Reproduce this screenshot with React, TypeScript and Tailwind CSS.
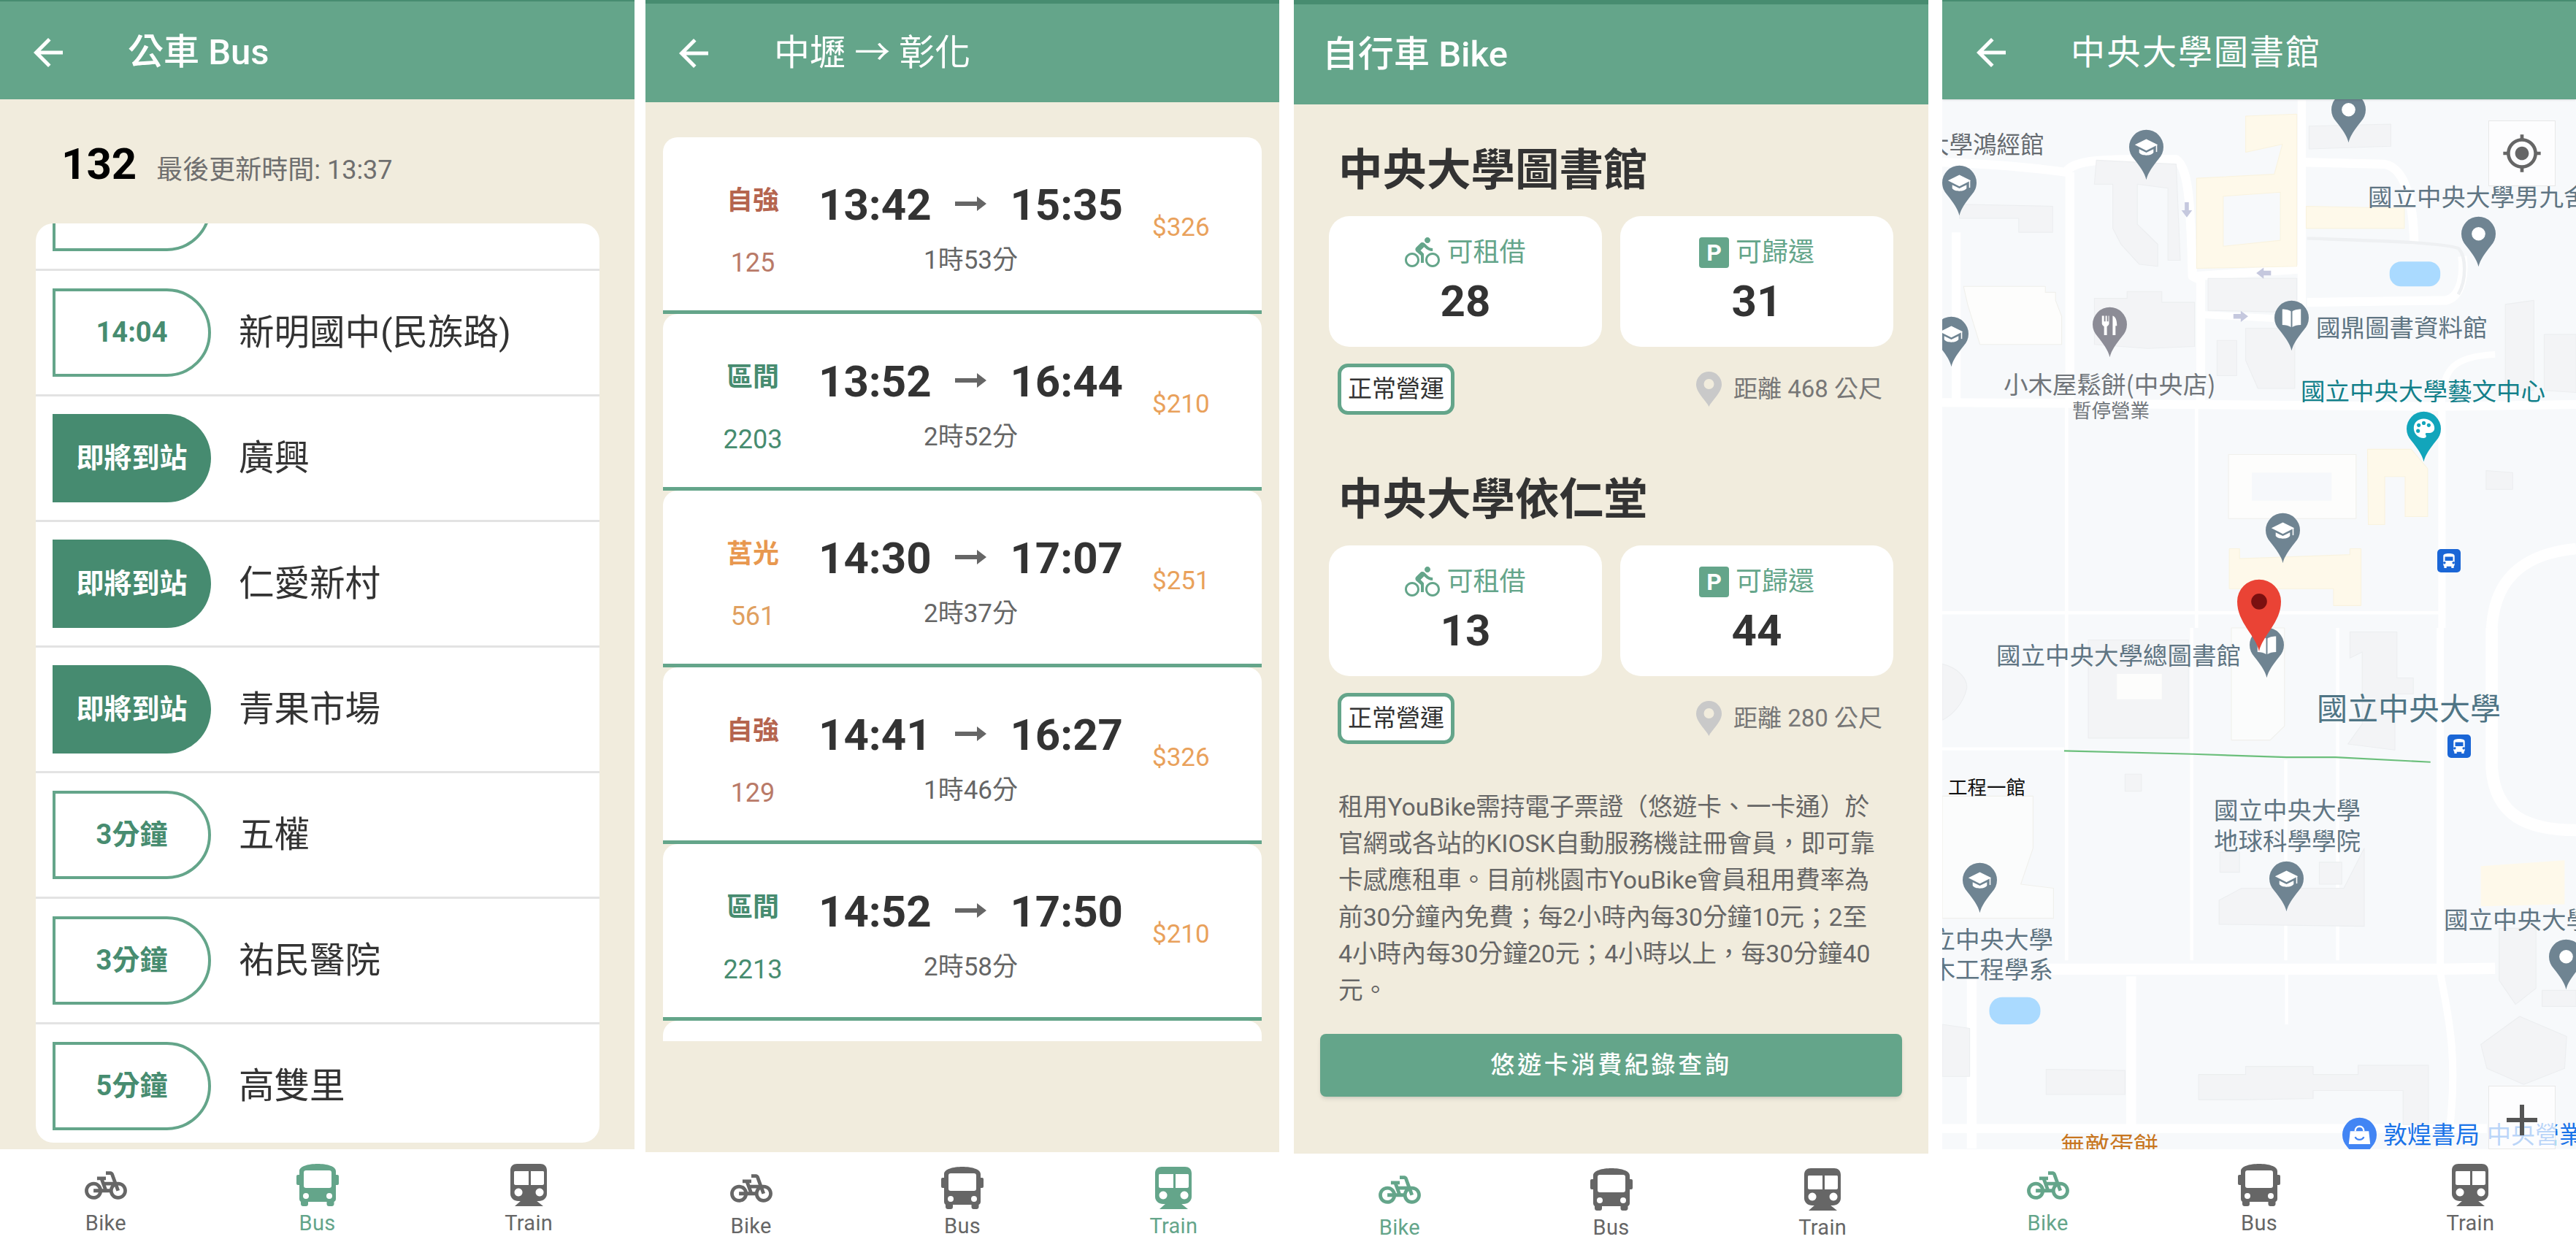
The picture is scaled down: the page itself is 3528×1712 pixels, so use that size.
import React from "react";
import { MdArrowBack, MdDirectionsBike, MdMyLocation, MdAdd } from "react-icons/md";

const PedalBike = ({ className }: { className?: string }) => (
  <svg viewBox="0 3.5 24 17" className={className} fill="currentColor">
    <path d="M18.18 10l-1.7-4.68C16.19 4.53 15.44 4 14.6 4H12v2h2.6l1.46 4h-4.81l-.36-1H12V7H7v2h1.75l1.82 5H9.9c-.44-2.23-2.31-3.88-4.65-3.99C2.45 9.87 0 12.2 0 15c0 2.8 2.2 5 5 5 2.46 0 4.45-1.69 4.9-4h4.2c.44 2.23 2.31 3.88 4.65 3.99 2.8.13 5.25-2.19 5.25-5 0-2.8-2.2-5-5-5h-.82zM7.82 16c-.4 1.17-1.49 2-2.82 2-1.68 0-3-1.32-3-3s1.32-3 3-3c1.33 0 2.42.83 2.82 2H5v2h2.82zm6.28-2h-1.4l-.73-2H15c-.44.58-.76 1.25-.9 2zm4.9 4c-1.68 0-3-1.32-3-3 0-.93.41-1.73 1.05-2.28l.96 2.64 1.88-.68-.97-2.67c.03 0 .06-.01.09-.01 1.68 0 3 1.32 3 3s-1.33 3-3.01 3z" />
  </svg>
);

const BusIcon = ({ className }: { className?: string }) => (
  <svg viewBox="0 0 58 58" className={className} fill="currentColor">
    <path fillRule="evenodd" d="M4 10C4 3 17 0 29 0s25 3 25 10v38c0 2-1 3-2.500 4v3c0 2-1.500 3-3 3h-4c-2 0-3-1-3-3v-3H16v3c0 2-1 3-3 3H9c-1.500 0-3-1-3-3v-3C5 51 4 50 4 48V10zm6 2c0-2 1-3 3-3h32c2 0 3 1 3 3v18c0 2-1 3-3 3H13c-2 0-3-1-3-3V12zm7 32a4 4 0 1 0-8 0 4 4 0 0 0 8 0zm32 0a4 4 0 1 0-8 0 4 4 0 0 0 8 0z" />
    <rect x="0" y="15" width="6" height="14" rx="2" />
    <rect x="52" y="15" width="6" height="14" rx="2" />
  </svg>
);

const TrainIcon = ({ className }: { className?: string }) => (
  <svg viewBox="0 0 50 58" className={className} fill="currentColor">
    <path fillRule="evenodd" d="M0 9C0 3 4 0 9 0h32c5 0 9 3 9 9v32c0 6-5 10-11 10H11C5 51 0 47 0 41V9zm5 3c0-2 1-2 2-2h18v19H7c-1 0-2-1-2-2V12zm23-2h16c1 0 2 0 2 2v15c0 1-1 2-2 2H28V10zM11 33.500a5.500 5.500 0 1 0 .1 0zm29 0a5.500 5.500 0 1 0 .1 0z" />
    <path d="M15 50h20l10 8H6z" />
  </svg>
);

type Tab = "Bike" | "Bus" | "Train";

const BottomNav = ({ active }: { active: Tab }) => {
  const tabs: { n: Tab; icon: React.ReactNode }[] = [
    { n: "Bike", icon: <PedalBike className="w-[58px] h-[41px]" /> },
    { n: "Bus", icon: <BusIcon className="w-[58px] h-[58px]" /> },
    { n: "Train", icon: <TrainIcon className="w-[50px] h-[58px]" /> },
  ];
  return (
    <div className="flex-1 w-full bg-white flex shrink-0">
      {tabs.map((t) => (
        <div
          key={t.n}
          className={`flex-1 flex flex-col items-center pt-[20px] ${t.n === active ? "text-[#64a58a]" : "text-[#666666]"}`}
        >
          <div className="h-[58px] flex items-center justify-center">{t.icon}</div>
          <div className="mt-[5px] text-[29px] leading-[36px] tracking-[0.3px]">{t.n}</div>
        </div>
      ))}
    </div>
  );
};

const Panel = ({ className, children }: { className: string; children: React.ReactNode }) => (
  <div className={`h-[1712px] flex flex-col overflow-hidden shrink-0 ${className}`}>{children}</div>
);

/* ---------- Bus ---------- */
const stops: { badge: string; name: string; on?: boolean }[] = [
  { badge: "14:02", name: "新明路" },
  { badge: "14:04", name: "新明國中(民族路)" },
  { badge: "即將到站", name: "廣興", on: true },
  { badge: "即將到站", name: "仁愛新村", on: true },
  { badge: "即將到站", name: "青果市場", on: true },
  { badge: "3分鐘", name: "五權" },
  { badge: "3分鐘", name: "祐民醫院" },
  { badge: "5分鐘", name: "高雙里" },
];

const BusPanel = () => (
  <Panel className="w-[869px]">
    <div className="h-[136px] shrink-0 bg-[#64a58a] border-t-[2px] border-[#478c70] pt-[6px] flex items-center text-white shadow-sm">
      <MdArrowBack size={60} className="ml-[36px]" />
      <div className="ml-[79px] text-[49px] font-medium leading-[60px]">公車 Bus</div>
    </div>
    <div className="h-[1438px] shrink-0 bg-[#f1ecdd] flex flex-col">
      <div className="h-[170px] shrink-0 pl-[84px] pt-[59px] flex items-baseline">
        <span className="text-[60px] leading-[60px] font-bold text-black">132</span>
        <span className="ml-[27px] text-[36px] leading-[40px] text-[#6f6f6f]">最後更新時間: 13:37</span>
      </div>
      <div className="ml-[49px] w-[772px] h-[1259px] bg-white rounded-[24px] overflow-hidden">
        <div className="-mt-[107px]">
          {stops.map((s, i) => (
            <div key={i} className="h-[172px] border-b-[3px] border-[#e3e3e3] flex items-center pl-[23px]">
              <div
                className={`w-[217px] h-[121px] rounded-r-[62px] flex items-center justify-center text-[38px] font-bold ${
                  s.on ? "bg-[#468b70] text-white" : "border-[4px] border-[#64a58a] text-[#478c70] bg-white"
                }`}
              >
                {s.badge}
              </div>
              <div className="ml-[38px] text-[48.5px] leading-[60px] text-[#333333]">{s.name}</div>
            </div>
          ))}
        </div>
      </div>
    </div>
    <BottomNav active="Bus" />
  </Panel>
);

/* ---------- Train ---------- */
const trains = [
  { t: "自強", n: "125", a: "13:42", b: "15:35", d: "1時53分", p: "$326", c: "text-[#b5654f]", nc: "text-[#b97a68]" },
  { t: "區間", n: "2203", a: "13:52", b: "16:44", d: "2時52分", p: "$210", c: "text-[#478c70]", nc: "text-[#478c70]" },
  { t: "莒光", n: "561", a: "14:30", b: "17:07", d: "2時37分", p: "$251", c: "text-[#e8984f]", nc: "text-[#e0a060]" },
  { t: "自強", n: "129", a: "14:41", b: "16:27", d: "1時46分", p: "$326", c: "text-[#b5654f]", nc: "text-[#b97a68]" },
  { t: "區間", n: "2213", a: "14:52", b: "17:50", d: "2時58分", p: "$210", c: "text-[#478c70]", nc: "text-[#478c70]" },
];

const TrainPanel = () => (
  <Panel className="w-[868px] ml-[15px]">
    <div className="h-[140px] shrink-0 bg-[#64a58a] border-t-[5px] border-[#478c70] flex items-center text-white shadow-sm">
      <MdArrowBack size={60} className="ml-[36px]" />
      <div className="ml-[80px] text-[49px] leading-[60px]">中壢 → 彰化</div>
    </div>
    <div className="h-[1438px] shrink-0 bg-[#f1ecdd] pt-[48px]">
      <div className="ml-[24px] w-[820px] h-[1238px] overflow-hidden">
        {trains.map((r) => (
          <div key={r.n} className="h-[242px] bg-white rounded-t-[20px] border-b-[5px] border-[#64a58a] flex">
            <div className="ml-[33px] w-[180px] flex flex-col items-center pt-[67px]">
              <div className={`text-[36px] leading-[40px] font-bold ${r.c}`}>{r.t}</div>
              <div className={`mt-[45px] text-[36px] leading-[40px] ${r.nc}`}>{r.n}</div>
            </div>
            <div className="w-[417px] flex flex-col pt-[63px]">
              <div className="flex items-center justify-between text-[60px] leading-[60px] font-bold text-[#333333]">
                <span>{r.a}</span>
                <svg viewBox="0 0 43 24" className="w-[43px] h-[24px] text-[#666666] -mt-[4px]" fill="currentColor">
                  <path d="M0 9h30V2l13 10-13 10v-7H0z" />
                </svg>
                <span>{r.b}</span>
              </div>
              <div className="mt-[26px] text-center text-[35px] leading-[40px] text-[#666666]">{r.d}</div>
            </div>
            <div className="ml-[40px] pt-[104px] text-[35px] leading-[40px] text-[#e9a15b]">{r.p}</div>
          </div>
        ))}
        <div className="h-[60px] bg-white rounded-t-[20px]" />
      </div>
    </div>
    <BottomNav active="Train" />
  </Panel>
);

/* ---------- Bike ---------- */
const ParkIcon = () => (
  <div className="w-[41px] h-[42px] bg-[#64a58a] rounded-[4px] flex items-center justify-center text-white text-[32px] leading-none font-bold">
    P
  </div>
);

const StatCard = ({ icon, label, value }: { icon: React.ReactNode; label: string; value: string }) => (
  <div className="w-[374px] h-[179px] bg-white rounded-[28px] flex flex-col items-center pt-[30px]">
    <div className="flex items-center h-[40px] gap-[9px] text-[#64a58a] text-[36px] leading-[40px]">
      {icon}
      <span>{label}</span>
    </div>
    <div className="mt-[17px] text-[60px] leading-[60px] font-bold text-[#333333]">{value}</div>
  </div>
);

const PinGlyph = ({ className }: { className?: string }) => (
  <svg viewBox="0 0 35 48" className={className} fill="currentColor">
    <path
      fillRule="evenodd"
      d="M17.5 48C14 40 0 29 0 17.5a17.5 17.5 0 0 1 35 0C35 29 21 40 17.5 48zm0-24a7 7 0 1 0 0-14 7 7 0 0 0 0 14z"
    />
  </svg>
);

const Station = ({ name, rent, park, dist, first }: { name: string; rent: string; park: string; dist: string; first?: boolean }) => (
  <div className={first ? "pt-[61px]" : "pt-[87px]"}>
    <div className="ml-[61px] text-[60.5px] leading-[60px] font-bold text-[#333333]">{name}</div>
    <div className="mt-[32px] ml-[48px] flex gap-[25px]">
      <StatCard icon={<MdDirectionsBike size={48} />} label="可租借" value={rent} />
      <StatCard icon={<ParkIcon />} label="可歸還" value={park} />
    </div>
    <div className="mt-[23px] flex items-center justify-between pl-[60px] pr-[63px]">
      <div className="w-[160px] h-[70px] bg-white border-[5px] border-[#64a58a] rounded-[14px] flex items-center justify-center text-[33px] text-[#333333]">
        正常營運
      </div>
      <div className="flex items-center gap-[16px] text-[33px] text-[#777777]">
        <PinGlyph className="w-[35px] h-[48px] text-[#c9c9c9]" />
        <span>距離 {dist} 公尺</span>
      </div>
    </div>
  </div>
);

const BikePanel = () => (
  <Panel className="w-[869px] ml-[20px]">
    <div className="h-[143px] shrink-0 bg-[#64a58a] border-t-[6px] border-[#478c70] flex items-center text-white shadow-sm">
      <div className="ml-[39px] text-[49px] font-medium leading-[60px]">自行車 Bike</div>
    </div>
    <div className="h-[1437px] shrink-0 bg-[#f1ecdd]">
      <Station first name="中央大學圖書館" rent="28" park="31" dist="468" />
      <Station name="中央大學依仁堂" rent="13" park="44" dist="280" />
      <div className="mt-[62px] ml-[61px] text-[33.7px] leading-[50.2px] text-[#666666] whitespace-nowrap">
        租用YouBike需持電子票證（悠遊卡、一卡通）於
        <br />
        官網或各站的KIOSK自動服務機註冊會員，即可靠
        <br />
        卡感應租車。目前桃園市YouBike會員租用費率為
        <br />
        前30分鐘內免費；每2小時內每30分鐘10元；2至
        <br />
        4小時內每30分鐘20元；4小時以上，每30分鐘40
        <br />
        元。
      </div>
      <div className="mt-[34px] ml-[36px] w-[797px] h-[86px] bg-[#64a58a] rounded-[8px] shadow-md flex items-center justify-center text-white text-[33px] tracking-[3.7px] font-medium">
        悠遊卡消費紀錄查詢
      </div>
    </div>
    <BottomNav active="Bike" />
  </Panel>
);

/* ---------- Map ---------- */
type PinKind = "grad" | "dot" | "book" | "fork" | "palette" | "bag";
const pins: { x: number; tip: number; k: PinKind; c: string }[] = [
  { x: 557, tip: 60, k: "dot", c: "#6f8492" },
  { x: 280, tip: 111, k: "grad", c: "#6f8492" },
  { x: 24, tip: 160, k: "grad", c: "#6f8492" },
  { x: 13, tip: 367, k: "grad", c: "#6f8492" },
  { x: 735, tip: 230, k: "dot", c: "#6f8492" },
  { x: 479, tip: 345, k: "book", c: "#6f8492" },
  { x: 230, tip: 354, k: "fork", c: "#8c8c96" },
  { x: 660, tip: 497, k: "palette", c: "#12a5bb" },
  { x: 467, tip: 636, k: "grad", c: "#6f8492" },
  { x: 445, tip: 793, k: "book", c: "#6f8492" },
  { x: 52, tip: 1115, k: "grad", c: "#6f8492" },
  { x: 472, tip: 1113, k: "grad", c: "#6f8492" },
  { x: 855, tip: 1220, k: "dot", c: "#6f8492" },
  { x: 572, tip: 1464, k: "bag", c: "#4285f4" },
];

const PinArt = ({ k }: { k: PinKind }) => {
  if (k === "dot") return <circle cx="24" cy="24" r="9.5" fill="#fff" />;
  if (k === "grad")
    return (
      <g fill="#fff">
        <path d="M24 13l16 8-16 8-16-8z" />
        <path d="M14 27l10 5 10-5v5c-3 5-17 5-20 0z" />
        <rect x="37.5" y="21" width="1.6" height="10" />
      </g>
    );
  if (k === "book")
    return (
      <g fill="#fff">
        <path d="M11 12c5 0 10 1 12 3v22c-3-2-7-3-12-3z" />
        <path d="M37 12c-5 0-10 1-12 3v22c3-2 7-3 12-3z" />
      </g>
    );
  if (k === "fork")
    return (
      <g fill="#fff">
        <path d="M14 12h2v8h2v-8h2v8h2v-8h1v11c0 2-2 3-3 4v12h-4V27c-1-1-3-2-3-4V12z" />
        <path d="M28 12c4 1 6 6 6 14h-2v13h-4z" />
      </g>
    );
  if (k === "palette")
    return (
      <g>
        <path fill="#fff" d="M24 10c8 0 15 6 15 13 0 5-4 7-8 7h-3c-2 0-2 2-1 3 1 2 0 4-3 4-8 0-14-6-14-14s6-13 14-13z" />
        <circle cx="17" cy="19" r="2.6" fill="#12a5bb" />
        <circle cx="24" cy="16" r="2.6" fill="#12a5bb" />
        <circle cx="31" cy="19" r="2.6" fill="#12a5bb" />
        <circle cx="16" cy="27" r="2.6" fill="#12a5bb" />
      </g>
    );
  return (
    <g fill="none" stroke="#fff">
      <path fill="#fff" stroke="none" d="M11 19h26l2 18H9z" />
      <path strokeWidth="2.4" d="M18 19c0-9 12-9 12 0" />
      <path strokeWidth="2.4" stroke="#4285f4" d="M18 27c2 5 10 5 12 0" />
    </g>
  );
};

const labels: { t: string; x: number; y: number; s: string; c: string }[] = [
  { t: "大學鴻經館", x: -23, y: 60, s: "text-[32.5px]", c: "text-[#666b70]" },
  { t: "國立中央大學男九舍", x: 583, y: 132, s: "text-[33.5px]", c: "text-[#5f7583]" },
  { t: "國鼎圖書資料館", x: 512, y: 311, s: "text-[33.5px]", c: "text-[#5f7583]" },
  { t: "小木屋鬆餅(中央店)", x: 84, y: 389, s: "text-[33.5px]", c: "text-[#70757a]" },
  { t: "暫停營業", x: 178, y: 425, s: "text-[26.5px]", c: "text-[#70757a]" },
  { t: "國立中央大學藝文中心", x: 491, y: 398, s: "text-[33.5px]", c: "text-[#12808a]" },
  { t: "國立中央大學總圖書館", x: 74, y: 760, s: "text-[33.5px]", c: "text-[#5f7583]" },
  { t: "國立中央大學", x: 513, y: 832, s: "text-[42px]", c: "text-[#4f7585]" },
  { t: "工程一館", x: 8, y: 941, s: "text-[26.5px]", c: "text-[#111111]" },
  { t: "國立中央大學", x: 372, y: 972, s: "text-[33.5px]", c: "text-[#5f7583]" },
  { t: "地球科學學院", x: 372, y: 1014, s: "text-[33.5px]", c: "text-[#5f7583]" },
  { t: "國立中央大學", x: -49, y: 1149, s: "text-[33.5px]", c: "text-[#5f7583]" },
  { t: "土木工程學系", x: -49, y: 1190, s: "text-[33.5px]", c: "text-[#5f7583]" },
  { t: "國立中央大學", x: 687, y: 1122, s: "text-[33.5px]", c: "text-[#5f7583]" },
  { t: "無敵蛋餅", x: 162, y: 1431, s: "text-[33.5px]", c: "text-[#c8761e]" },
  { t: "敦煌書局", x: 604, y: 1416, s: "text-[33px]", c: "text-[#1a73e8]" },
  { t: "中央營業", x: 746, y: 1416, s: "text-[33px]", c: "text-[#1a73e8]" },
];

const MapBackground = () => {
  const grey = "#f3f4f6";
  const line = "#eceef0";
  return (
    <svg className="absolute left-0 top-0 w-[868px] h-[1438px]" viewBox="0 0 868 1438">
      <rect width="868" height="1438" fill="#f7f9fb" />
      <g transform="translate(-10,-136) scale(0.56,0.5485)" fill="none" strokeLinejoin="round">
        <g stroke="#ffffff">
          <path strokeWidth="22" d="M18 1005L1230 1015L1568 1010" />
          <path strokeWidth="22" d="M330 430V1000" />
          <path strokeWidth="22" d="M18 405C150 410 250 420 320 430C340 400 400 395 590 398C620 420 625 500 630 690L650 700V1000" />
          <path strokeWidth="22" d="M630 690L897 672" />
          <path strokeWidth="20" d="M897 250V770" />
          <path strokeWidth="22" d="M897 405L1100 410C1150 420 1170 500 1172 610" />
          <path strokeWidth="18" d="M640 785L830 795" />
          <path strokeWidth="22" d="M910 755L1250 750C1290 740 1295 680 1290 640" />
          <path strokeWidth="18" d="M1240 1010V1568" />
          <path strokeWidth="16" d="M1240 1010C1240 920 1270 890 1370 885" />
          <path strokeWidth="22" d="M52 580V1000" />
          <path strokeWidth="28" d="M1362 1568C1370 1420 1470 1380 1568 1370" />
          <path strokeWidth="8" d="M18 1530H1240M640 1010V1568M322 1010V1568" />
        </g>
        <path stroke="#eef0f2" strokeWidth="8" d="M910 595C1050 600 1240 605 1280 620C1300 640 1300 700 1280 735" />
        <g fill={grey} stroke={line} strokeWidth="2">
          <path d="M395 400L590 410L600 650L570 650L570 470L495 460L495 560L545 610L545 665L500 660L455 610L435 570L435 460L390 460Z" />
          <path d="M390 745H470V728H555V755H635V865L520 870L390 860Z" />
          <path d="M915 315L1115 310V365L915 372Z" />
          <path d="M668 695H885V780L668 775Z" />
          <path d="M690 850H738V938H690Z" />
          <path d="M760 820H880V970H790L760 900Z" />
          <path d="M1395 760L1465 750V975H1395Z" />
          <path d="M1490 835H1568V980L1490 975Z" />
          <path d="M60 510L288 515V580H205V545H60Z" />
          <path d="M1348 1175L1413 1180V1222H1348Z" />
        </g>
        <g fill="#fdfdfc" stroke="#f0f0ec" strokeWidth="2">
          <path d="M70 715H270V730H295V750L310 790V860H110L80 760Z" />
          <path d="M718 1135H1030V1295H718Z" />
        </g>
        <path d="M775 1180H970V1250H775Z" fill="#f6f8fb" />
        <g fill="#fef9ea" stroke="#f9f3df" strokeWidth="2">
          <path fillRule="evenodd" d="M760 290L885 285V665L640 670V445L830 435L850 360L760 380ZM705 490V615L845 600V480Z" />
          <path d="M908 515L1148 520V570H908Z" />
          <path d="M1058 1122H1165L1205 1170V1290H1150V1190H1100V1310H1060Z" />
          <path d="M720 1370H745V1395L1015 1385V1370H1042V1512H975V1470H720Z" />
        </g>
        <rect x="1112" y="653" width="124" height="62" rx="28" fill="#aadaff" />
        <g fill="#c5c8de">
          <path d="M611 505h10v20h8l-13 18-13-18h8z" />
          <path d="M822 676v12h-18v8l-18-14 18-14v8z" />
          <path d="M730 784v12h18v8l18-14-18-14v8z" />
        </g>
      </g>
      <g transform="translate(-10,724) scale(0.56,0.5485)" fill="none" strokeLinejoin="round">
        <g stroke="#ffffff">
          <path strokeWidth="28" d="M18 852H1240L1370 850" />
          <path strokeWidth="18" d="M1236 0V860C1250 950 1280 1050 1260 1240" />
          <path strokeWidth="8" d="M18 302H316M322 0V830M628 0V830M985 0V830M858 330V830M860 860V990" />
          <path strokeWidth="24" d="M480 870V1240M90 870V1300" />
          <path strokeWidth="22" d="M18 1250H1350" />
          <path strokeWidth="30" d="M1362 0V350C1370 470 1450 505 1568 505" />
        </g>
        <g fill={grey} stroke={line} strokeWidth="2">
          <path d="M375 30H620V275H375Z" />
          <path d="M1015 10H1130V125H1170V165H1125V305L1010 290L1045 240V60L1015 75Z" />
          <path d="M18 90C60 100 80 130 78 150C70 190 40 220 18 230Z" />
          <path d="M465 365H505V408H465Z" />
          <path d="M695 680L750 650H1000L1050 550V745L695 740Z" />
          <path d="M697 560H745V610H697Z" />
          <path d="M940 585H995V640H940Z" />
          <path d="M272 1102L465 1105V1165H272Z" />
          <path d="M645 1115H760V1095H925V1115H1035V1092H1207V1240H1145V1155H925V1175L765 1178L645 1178Z" />
          <path d="M18 990L85 1000V1120H18Z" />
          <path d="M1335 1040L1430 970L1545 1020L1540 1100L1440 1140L1350 1100Z" />
          <path d="M1380 750H1470V900L1420 940L1380 880Z" />
          <path d="M1485 905H1568V945H1485Z" />
        </g>
        <path d="M445 115H555V178H445Z" fill="#fdfdfc" />
        <g fill="#fbfcfc" stroke="#f0f0ec" strokeWidth="2">
          <path d="M725 0H855V245L820 280H725Z" />
          <path d="M18 420H240V550L210 640L290 650V725H18Z" />
        </g>
        <path d="M1335 595L1540 580V690L1335 695Z" fill="#fef9ea" />
        <rect x="133" y="922" width="125" height="68" rx="32" fill="#aadaff" />
        <path d="M316 307L630 315L860 323H980L1212 335" stroke="#6bbf7b" strokeWidth="4" />
      </g>
    </svg>
  );
};

const BusStopMark = ({ x, y }: { x: number; y: number }) => (
  <div
    className="absolute w-[32px] h-[32px] bg-[#1a66d6] rounded-[5px] -translate-x-1/2 -translate-y-1/2 flex items-center justify-center"
    style={{ left: x, top: y }}
  >
    <svg viewBox="0 0 20 20" className="w-[22px] h-[22px]" fill="#fff">
      <path fillRule="evenodd" d="M3 4c0-2 3-3 7-3s7 1 7 3v11c0 1-1 2-1 2v2h-3v-2H7v2H4v-2s-1-1-1-2V4zm2 1v5h10V5zm1 7.500a1.500 1.500 0 1 0 0 .1zm11 0a1.500 1.500 0 1 0 0 .1z" />
    </svg>
  </div>
);

const MapPanel = () => (
  <Panel className="w-[868px] ml-[19px]">
    <div className="relative z-10 h-[136px] shrink-0 bg-[#64a58a] border-t-[2px] border-[#478c70] pt-[6px] flex items-center text-white shadow-sm">
      <MdArrowBack size={60} className="ml-[37px]" />
      <div className="ml-[79px] text-[47px] leading-[60px] tracking-[2px]">中央大學圖書館</div>
    </div>
    <div className="relative h-[1438px] shrink-0 overflow-hidden bg-[#f7f9fb] font-['Noto_Sans_CJK_TC','Roboto',sans-serif]">
      <MapBackground />
      {labels.map((l, i) => (
        <div
          key={i}
          className={`absolute whitespace-nowrap -translate-y-1/2 leading-[40px] ${l.s} ${l.c}`}
          style={{ left: l.x, top: l.y }}
        >
          {l.t}
        </div>
      ))}
      {pins.map((p, i) => (
        <svg
          key={i}
          viewBox="0 0 48 70"
          className="absolute w-[47px] h-[70px]"
          style={{ left: p.x - 24, top: p.tip - 70 }}
        >
          <path d="M24 70C22 60 14 50 7 41A24 24 0 1 1 41 41C34 50 26 60 24 70Z" fill={p.c} />
          <PinArt k={p.k} />
        </svg>
      ))}
      <BusStopMark x={694} y={632} />
      <BusStopMark x={708} y={886} />
      <svg viewBox="0 0 61 100" className="absolute left-[404px] top-[657px] w-[60px] h-[100px]">
        <path d="M30.500 100C26 78 0 60 0 30.500a30.500 30.500 0 0 1 61 0C61 60 35 78 30.500 100z" fill="#ea4335" />
        <circle cx="30.500" cy="30.500" r="11" fill="#7b1010" />
      </svg>
      <div className="absolute left-[748px] top-[29px] w-[92px] h-[90px] bg-white/70 border border-[#e8e8e8] flex items-center justify-center text-[#666666]">
        <MdMyLocation size={56} />
      </div>
      <div className="absolute left-[748px] bottom-0 w-[92px] h-[87px] bg-white/70 border border-[#e8e8e8] flex justify-center text-[#555555]">
        <MdAdd size={72} className="mt-[10px]" />
      </div>
    </div>
    <BottomNav active="Bike" />
  </Panel>
);

export default function App() {
  return (
    <div className="w-[3528px] h-[1712px] bg-white flex overflow-hidden font-['Roboto','Noto_Sans_CJK_TC',sans-serif]">
      <BusPanel />
      <TrainPanel />
      <BikePanel />
      <MapPanel />
    </div>
  );
}
